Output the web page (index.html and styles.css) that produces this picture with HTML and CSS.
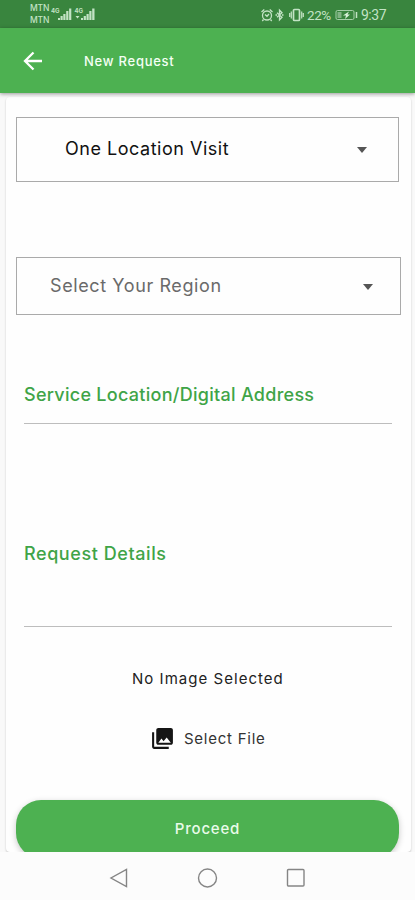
FILE: index.html
```html
<!DOCTYPE html>
<html lang="en">
<head>
<meta charset="utf-8">
<title>New Request</title>
<link rel="stylesheet" href="styles.css">
</head>
<body>
<div class="screen">
  <div class="status">
    <div class="carrier"><span>MTN</span><span>MTN</span></div>
    <svg class="signals" width="46" height="16" viewBox="0 0 46 16" fill="#c3e3c5">
      <path d="M7 14v-2h2v2zM9.500 14v-4h2.200v4zM12.300 14V8h2.200v6zM15.200 14V5h2.200v9zM18.100 14V2.500h2.200V14z"/>
      <path d="M30 14v-2h2v2zM32.700 14v-4h2.200v4zM35.500 14V8h2.200v6zM38.300 14V5h2.200v9zM41.200 14V2.500h2.300V14z"/>
      <path d="M24.500 10h4l-2 2.500z"/>
      <text x="0" y="7" class="gen">4G</text>
      <text x="23.500" y="7" class="gen">4G</text>
    </svg>
    <div class="indicators">
      <svg width="14" height="14" viewBox="0 0 14 14" fill="none" stroke="#c3e3c5" stroke-width="1.300"><circle cx="7" cy="7.500" r="4.500"/><path d="M1.500 4L4.300 1.500M9.700 1.500L12.500 4M5 6.500l2 1.800 2-2.300M3.500 11.500L2.300 13M10.500 11.500L11.700 13"/></svg>
      <svg width="11" height="14" viewBox="0 0 11 14" fill="none" stroke="#c3e3c5" stroke-width="1.300"><path d="M3 4.800l5 4.400L5.500 11.800v-9.600l2.500 2.600-5 4.400"/><path d="M1.500 7H3M8 7h1.500"/></svg>
      <svg class="vibrate" width="15" height="14" viewBox="0 0 15 14" fill="none" stroke="#c3e3c5" stroke-width="1.700"><rect x="4.500" y="1.500" width="6" height="11" rx="1"/><path d="M2.300 3.500v7M12.700 3.500v7M.7 5v4M14.300 5v4" stroke-width="1.200"/></svg>
      <span class="percent">22%</span>
      <svg class="battery" width="23" height="12" viewBox="0 0 23 12" fill="none" stroke="#a5cfa8" stroke-width="1"><rect x="1" y="1.500" width="18" height="9" rx="1.500"/><path d="M21.500 3v6" stroke="#c3e3c5" stroke-width="1.500"/><path d="M2.500 3h4v6h-4z" fill="#82b485" stroke="none"/><path d="M14 2.500L8 6.500h3l-1 3.500 5-4.500h-2.500z" fill="#d9f2da" stroke="none"/></svg>
      <span class="clock">9:37</span>
    </div>
  </div>
  <header class="appbar">
    <svg width="20" height="20" viewBox="0 0 20 20" fill="none" stroke="#fff" stroke-width="2.300"><path d="M19 10H2M10.500 1.500L2 10l8.500 8.500"/></svg>
    <h1>New Request</h1>
  </header>
  <main class="page">
    <div class="card">
      <div class="select visit"><span>One Location Visit</span><i class="caret"></i></div>
      <div class="select region"><span>Select Your Region</span><i class="caret"></i></div>
      <div class="field address"><label>Service Location/Digital Address</label></div>
      <div class="field details"><label>Request Details</label></div>
      <p class="empty"><span>No Image Selected</span></p>
      <div class="file">
        <svg width="25" height="25" viewBox="0 0 24 24" fill="#151515"><path d="M22 16V4c0-1.100-.9-2-2-2H8c-1.100 0-2 .9-2 2v12c0 1.100.9 2 2 2h12c1.100 0 2-.9 2-2zm-11-4l2.030 2.710L16 11l4 5H8l3-4zM2 6v14c0 1.100.9 2 2 2h14v-2H4V6H2z"/></svg>
        <span>Select File</span>
      </div>
      <div class="proceed"><span>Proceed</span></div>
    </div>
  </main>
  <nav class="navbar">
    <svg width="20" height="22" viewBox="0 0 20 22"><path d="M17.500 2.500v17L2 11z"/></svg>
    <svg width="22" height="22" viewBox="0 0 22 22"><circle cx="11.500" cy="11" r="9"/></svg>
    <svg width="20" height="22" viewBox="0 0 20 22"><rect x="2.500" y="2.500" width="16.500" height="16.500" rx="1"/></svg>
  </nav>
</div>
</body>
</html>
```

FILE: styles.css
```css
* { box-sizing: border-box; }
body { margin: 0; font-family: Inter, sans-serif; background: #fcfcfc; }
.screen { width: 415px; height: 900px; display: flex; flex-direction: column; overflow: hidden; }
svg { display: block; flex: none; }
span, label, h1 { white-space: nowrap; }

.status { height: 28px; flex: none; display: flex; background: #39853e; color: #c3e3c5; padding-left: 30px; }
.carrier { width: 21px; padding-top: 2px; display: flex; flex-direction: column; font-size: 8.5px; font-weight: 500; line-height: 12px; letter-spacing: -.2px; }
.signals { margin-top: 6px; }
.gen { font: 700 6px Inter, sans-serif; }
.indicators { display: flex; align-items: center; margin-left: 163px; height: 29px; }
.vibrate { margin-left: 4px; }
.percent { width: 26px; margin-left: 3px; font: 13.5px/16px Roboto, sans-serif; letter-spacing: -.4px; }
.battery { margin-left: 2px; }
.clock { margin-left: 3px; font: 14px/16px Roboto, sans-serif; letter-spacing: -.5px; }

.appbar { height: 65px; flex: none; display: flex; align-items: center; padding-left: 23px; background: #4db151; color: #f4fff4; box-shadow: 0 1px 4px rgba(0,0,0,.4); z-index: 1; }
.appbar h1 { margin: 0 0 0 41px; font-size: 13px; font-weight: 500; letter-spacing: .75px; }

.page { height: 759px; flex: none; padding: 4px 4px 0 6px; background: #f9f9f9; }
.card { height: 755px; overflow: hidden; padding: 20px 0 0 10px; background: #fefefe; border-radius: 4px; box-shadow: 0 1px 2px rgba(0,0,0,.22); display: flex; flex-direction: column; }
.select { flex: none; display: flex; align-items: center; justify-content: space-between; border: 1px solid #aaa; font-size: 18px; }
.visit { width: 383px; height: 65px; padding: 0 31px 2px 48px; color: #111; letter-spacing: .52px; }
.region { width: 385px; height: 58px; margin-top: 75px; padding: 0 27px 2px 33px; color: #6a6a6a; letter-spacing: .6px; }
.caret { border: 5.5px solid transparent; border-top: 6px solid #555; border-bottom: 0; }
.visit .caret { margin-top: 2px; }
.region .caret { margin-top: 3px; }
.field { flex: none; width: 368px; margin-left: 8px; border-bottom: 1.500px solid #bdbdbd; font-size: 18px; line-height: 24px; color: #3fa447; }
.address { height: 41px; margin-top: 68px; letter-spacing: .28px; font-weight: 500; }
.details { height: 85px; margin-top: 118px; letter-spacing: .58px; font-weight: 500; }
.empty { margin: 42px 0 0; padding-left: 116px; font-size: 15px; line-height: 20px; color: #222; letter-spacing: 1.03px; }
.file { display: flex; align-items: center; height: 24px; margin: 37px 0 0 134px; color: #333; font-size: 15px; letter-spacing: .75px; gap: 9px; }
.proceed { flex: none; width: 383px; height: 58px; margin-top: 50px; padding-bottom: 1px; display: flex; align-items: center; justify-content: center; border-radius: 25px; background: #4db151; color: #e9fbea; font-size: 15px; font-weight: 500; letter-spacing: .8px; box-shadow: 0 2px 6px rgba(0,0,0,.22); }

.navbar { flex: 1; display: flex; padding: 15px 0 0 109px; gap: 67px; background: #fcfcfc; position: relative; }
.navbar svg { fill: none; stroke: #858585; stroke-width: 1.400; }
```
